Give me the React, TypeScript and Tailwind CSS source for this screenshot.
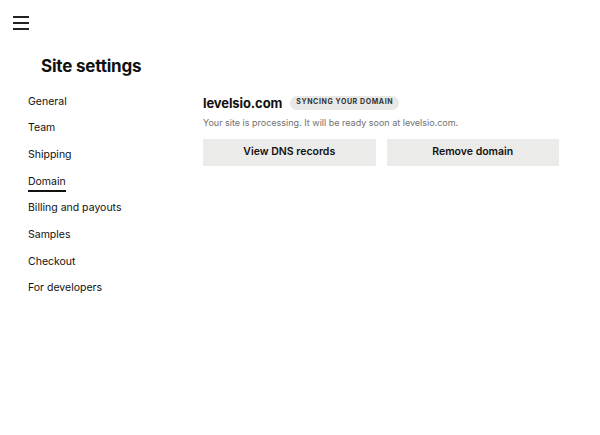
const navItems = [
  "General",
  "Team",
  "Shipping",
  "Domain",
  "Billing and payouts",
  "Samples",
  "Checkout",
  "For developers",
];

export default function App() {
  return (
    <div className="min-h-screen w-full bg-white text-[#111] font-['Inter',sans-serif]">
      <header className="px-[13px] pt-[16px]">
        <button className="flex flex-col gap-[4.5px] w-[16px]">
          <span className="block h-[1.5px] w-[16px] bg-[#222]" />
          <span className="block h-[1.5px] w-[16px] bg-[#222]" />
          <span className="block h-[1.5px] w-[16px] bg-[#222]" />
        </button>
      </header>

      <h1 className="ml-[41px] mt-[24px] text-[17px] font-bold tracking-[-0.2px] leading-[24px]">
        Site settings
      </h1>

      <div className="flex mt-[16px]">
        <nav className="w-[203px] shrink-0 pl-[28px] flex flex-col">
          {navItems.map((item) => (
            <a
              key={item}
              className="h-[26.7px] flex items-start text-[10.5px] leading-[16px] text-[#111]"
            >
              <span
                className={
                  item === "Domain"
                    ? "border-b-2 border-[#111] leading-[14px] pb-[1px] mt-[1px]"
                    : ""
                }
              >
                {item}
              </span>
            </a>
          ))}
        </nav>

        <main className="w-[356px]">
          <div className="flex items-center gap-[8px]">
            <h2 className="text-[13px] font-bold leading-[18px] tracking-[-0.1px]">levelsio.com</h2>
            <span className="rounded-full bg-[#e8e8e6] px-[6px] h-[14px] flex items-center text-[7px] font-bold uppercase tracking-[0.6px] text-[#333]">
              Syncing your domain
            </span>
          </div>
          <p className="mt-[4px] text-[9px] text-[#707070] leading-[14px]">
            Your site is processing. It will be ready soon at levelsio.com.
          </p>
          <div className="mt-[9px] grid grid-cols-2 gap-[11px]">
            <button className="h-[27px] bg-[#ebebea] text-[10.5px] font-semibold text-[#111]">
              View DNS records
            </button>
            <button className="h-[27px] bg-[#ebebea] text-[10.5px] font-semibold text-[#111]">
              Remove domain
            </button>
          </div>
        </main>
      </div>
    </div>
  );
}
